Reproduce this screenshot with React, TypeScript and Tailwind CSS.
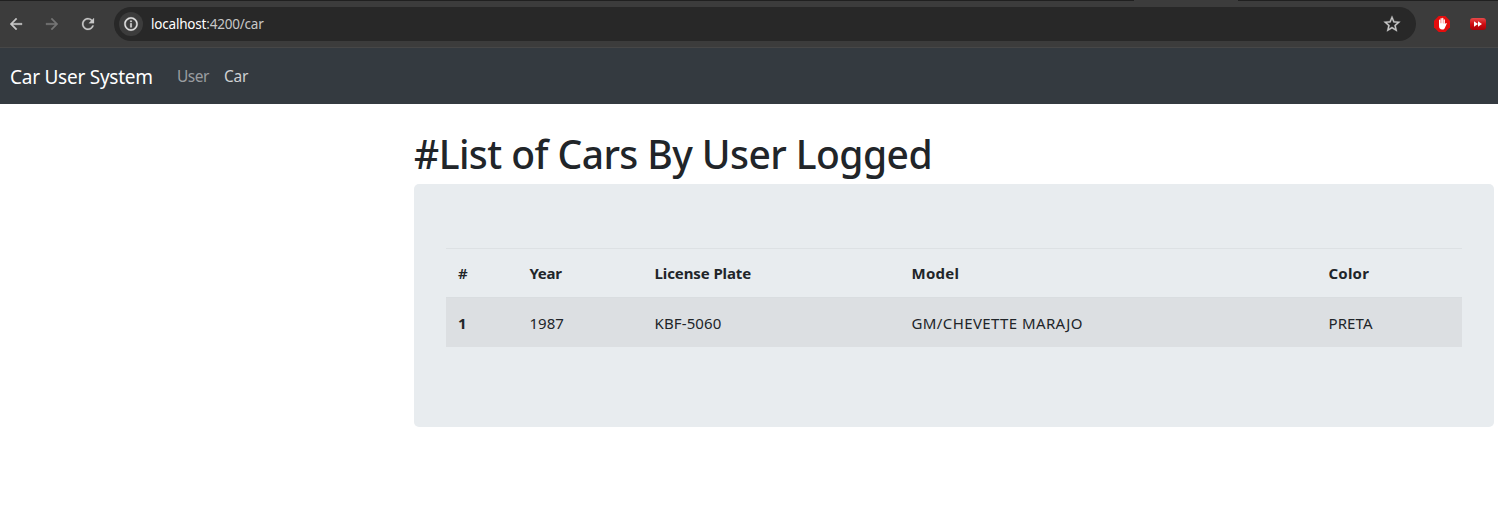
import React from "react";
import { MdArrowBack, MdArrowForward, MdRefresh, MdInfoOutline, MdStarBorder } from "react-icons/md";

type Column = { label: string; width: string; labelStyle: string; value: string; valueStyle: string };

const columns: Column[] = [
  { label: "#", width: "w-[71.5px]", labelStyle: "font-semibold", value: "1", valueStyle: "font-bold" },
  { label: "Year", width: "w-[125px]", labelStyle: "tracking-[-0.3px]", value: "1987", valueStyle: "" },
  { label: "License Plate", width: "w-[257px]", labelStyle: "tracking-[-0.1px]", value: "KBF-5060", valueStyle: "tracking-[0.12px]" },
  { label: "Model", width: "w-[417px]", labelStyle: "tracking-[0.25px]", value: "GM/CHEVETTE MARAJO", valueStyle: "tracking-[0.4px]" },
  { label: "Color", width: "w-[145.5px]", labelStyle: "tracking-[0.2px]", value: "PRETA", valueStyle: "tracking-[0.1px]" },
];

function BrowserBar() {
  return (
    <div className="bg-[#3c3c3c]">
      <div className="flex h-px">
        <div className="w-[1134px] bg-[#202020]" />
        <div className="ml-auto w-[260px] bg-[#202020]" />
      </div>
      <div className="flex h-[47px] items-center border-b border-[#474747] text-[#c7c7c7] [&_path[fill=none]]:stroke-none">
        <MdArrowBack className="ml-[7px] size-[18px] stroke-current stroke-[0.5]" />
        <MdArrowForward className="ml-[18px] size-[18px] stroke-current stroke-[0.5] text-[#757575]" />
        <MdRefresh className="ml-[18px] size-[18px] stroke-current stroke-[0.3]" />
        <div className="ml-[17px] flex h-[34px] w-[1302px] items-center rounded-full bg-[#282828] pl-[5px]">
          <div className="flex size-6 items-center justify-center rounded-full bg-[#3c3c3c]">
            <MdInfoOutline className="size-4 stroke-current stroke-[0.5] text-[#e3e3e3]" />
          </div>
          <span className="ml-2 text-[13.5px] tracking-[-0.2px] text-[#c7c7c7]">
            <span className="text-white">localhost</span>:4200/car
          </span>
          <MdStarBorder className="mr-[14px] ml-auto size-[20px] stroke-current stroke-[0.3]" />
        </div>
        <svg className="ml-[18px] size-4" viewBox="0 0 16 16">
          <path d="M4.7 0h6.6L16 4.7v6.6L11.3 16H4.7L0 11.3V4.7z" fill="#e40d0d" />
          <path d="M5 4.2c0-1 1.2-1 1.2 0v3h.3V2.8c0-1 1.3-1 1.3 0v4.4h.3V2.5c0-1 1.3-1 1.3 0v4.9h.3V4c0-1 1.2-1 1.2 0v4.3l.7-1c.5-.7 1.400-.2 1 .6l-1.800 4c-.5 1.200-1.200 1.600-2.500 1.600C6 13.500 5 12 5 10z" fill="#fff" />
        </svg>
        <svg className="ml-5 size-4" viewBox="0 0 16 16">
          <defs>
            <linearGradient id="red" x1="0" y1="0" x2="0" y2="1">
              <stop offset="0" stopColor="#e54a4a" />
              <stop offset=".5" stopColor="#d00d12" />
              <stop offset="1" stopColor="#a80006" />
            </linearGradient>
          </defs>
          <rect y="2" width="16" height="12" rx="3" fill="url(#red)" />
          <path d="M4 5.300l4 2.700-4 2.700zM8 5.300l4 2.700-4 2.700z" fill="#fff" />
        </svg>
      </div>
    </div>
  );
}

export default function App() {
  return (
    <div className="h-[518px] overflow-hidden bg-white font-['Noto_Sans',sans-serif] text-[#212529]">
      <BrowserBar />
      <nav className="flex h-14 items-center bg-[#343a40] pl-[10px]">
        <span className="w-[143px] pt-0.5 text-[19px] tracking-[-0.25px] whitespace-nowrap text-white">Car User System</span>
        <span className="ml-6 w-[32px] pt-0.5 text-[15.5px] tracking-[-0.5px] text-[#9a9da0]">User</span>
        <span className="ml-[15px] pt-0.5 text-[15.5px] tracking-[-0.3px] text-[#cfd1d3]">Car</span>
      </nav>
      <main className="ml-[414px] w-[1080px] pt-[26px]">
        <h1 className="mb-1.5 h-12 text-[39px] leading-[48px] font-medium tracking-[-0.56px] whitespace-nowrap">
          #List of Cars By User Logged
        </h1>
        <div className="h-[243px] rounded-[5px] bg-[#e8ecef] px-8 pt-16">
          <table className="w-[1016px] table-fixed border-separate border-spacing-0 text-left text-[15px] leading-6 whitespace-nowrap">
            <thead>
              <tr>
                {columns.map((c) => (
                  <th key={c.label} className={`h-[49px] border-t border-[#dde1e4] px-3 py-0 font-bold ${c.width}`}>
                    <span className={c.labelStyle}>{c.label}</span>
                  </th>
                ))}
              </tr>
            </thead>
            <tbody>
              <tr className="bg-[#dcdfe2]">
                {columns.map((c) => (
                  <td key={c.label} className="h-[50px] border-t border-[#d9dde0] px-3 py-0">
                    <span className={c.valueStyle}>{c.value}</span>
                  </td>
                ))}
              </tr>
            </tbody>
          </table>
        </div>
      </main>
    </div>
  );
}
